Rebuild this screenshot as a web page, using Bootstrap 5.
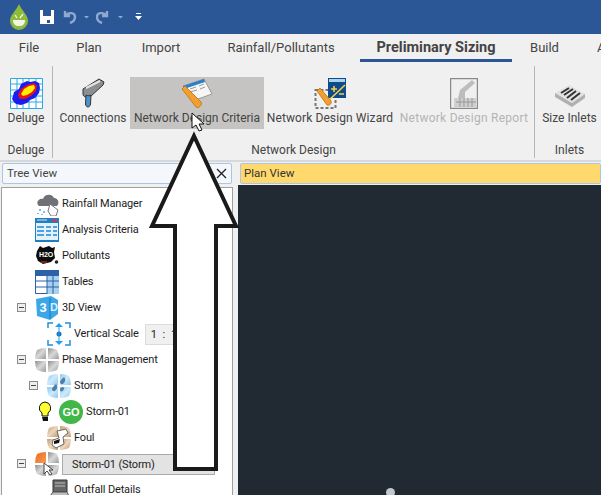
<!DOCTYPE html>
<html lang="en">
<head>
  <meta charset="UTF-8" />
  <title>Preliminary Sizing</title>
  <link rel="stylesheet" href="https://cdn.jsdelivr.net/npm/bootstrap@5.3.0/dist/css/bootstrap.min.css"/>
  <style>
    html, body { width: 601px; height: 495px; overflow: hidden; }
    body { position: relative; background: #f0f0f0; color: #444; font-family: Roboto, "Open Sans", sans-serif; font-size: 12px; line-height: 16px; }
    .defs-only { position: absolute; width: 0; height: 0; }

    .title-bar { height: 34px; background: #2b5797; padding-left: 9px; gap: 7px; }

    .tab-bar { height: 28px; padding-top: 2px; font-size: 13px; color: #444; white-space: nowrap; }
    .tab-item { flex: none; text-align: center; line-height: 24px; height: 26px; }
    .tab-on { font-weight: 700; font-size: 14.500px; border-bottom: 3px solid #2b5797; }
    .tab-file { width: 58px; }
    .tab-plan { width: 62px; }
    .tab-import { width: 82px; }
    .tab-rain { width: 158px; }
    .tab-sizing { width: 152px; }
    .tab-build { width: 65px; }
    .tab-last { width: 24px; padding-left: 20px; text-align: left; }

    .ribbon { height: 100px; border-bottom: 2px solid #d8d8d8; white-space: nowrap; }
    .rib-group { flex: none; border-right: 1px solid #b5b5b5; margin-top: 4px; height: 92px; }
    .rib-group:last-child { border-right: 0; }
    .group-deluge { width: 53px; }
    .group-design { width: 482px; }
    .group-inlets { width: 66px; padding-left: 3px; }
    .rib-tools { height: 76px; }
    .rib-btn { flex: 1 0 auto; height: 52px; margin-top: 11px; padding-top: 1px; text-align: center; }
    .rib-btn svg { display: block; margin: 0 auto 1px; }
    .btn-conn { flex: none; width: 77px; padding-left: 3px; }
    .btn-crit { flex: none; width: 134px; }
    .btn-wiz { flex: none; width: 132px; letter-spacing: .1px; }
    .btn-rep { flex: none; width: 136px; letter-spacing: .25px; }
    .rib-hot { background: #c6c4c2; }
    .rib-off { color: #b4b4b4; }
    .rib-label { text-align: center; height: 16px; line-height: 16px; }

    .panes { height: 333px; padding-top: 1px; }
    .tree-pane { width: 233px; flex: none; }
    .tree-head { height: 21px; margin: 0 1px 3px 2px; background: #f4f8fd; border: 1px solid #a9c6ea; border-radius: 2px; padding: 0 4px; line-height: 18px; font-size: 11.500px; }
    .pin-icon { margin-right: 9px; }
    .tree-body { height: 309px; margin-left: 1px; padding-top: 3px; background: #fff; border: 1px solid #a0a0a0; border-width: 1px 1px 0 1px; overflow: hidden; color: #1c1c1c; font-size: 11px; letter-spacing: -.15px; }
    .tree-row { height: 26px; position: relative; white-space: nowrap; gap: 3px; }
    .tree-row svg { flex: none; }
    .lvl-1 { padding-left: 33px; }
    .lvl-2 { padding-left: 45px; }
    .lvl-bulb { padding-left: 36px; }
    .twist { width: 9px; height: 9px; border: 1px solid #8a8a8a; background: #eee; position: absolute; top: 8px; left: 15px; }
    .lvl-2 .twist { left: 27px; }
    .twist::after { content: ""; position: absolute; left: 1px; right: 1px; top: 3px; height: 1px; background: #444; }
    .tree-combo { position: relative; background: #e3e3e3; height: 21px; line-height: 19px; border: 1px solid #dcdcdc; color: #222; flex: none; }
    .tree-combo::after { content: ""; position: absolute; right: 5px; top: 4px; width: 7px; height: 7px; border: solid #d2d2d2; border-width: 0 1px 1px 0; transform: rotate(45deg); }
    .combo-scale { width: 71px; margin-left: 3px; padding-left: 5px; letter-spacing: 1.500px; background: #f0f0f0; }
    .combo-phase { width: 153px; padding-left: 9px; border-color: #aaa; }

    .plan-pane { flex: 1; margin-left: 5px; }
    .plan-head { height: 21px; margin: 0 0 1px 2px; background: #ffd96e; border: 1px solid #a9c6ea; border-radius: 2px; padding-left: 3px; line-height: 18px; font-size: 11.500px; color: #333; }
    .plan-canvas { height: 310px; background: #212a33; position: relative; }
    .plan-dot { position: absolute; left: 148px; top: 303px; width: 9px; height: 9px; background: #c4c8cc; border-radius: 50%; }

    .big-arrow { position: absolute; left: 140px; top: 130px; }
    .hot-cursor { position: absolute; left: 191px; top: 112px; }
  </style>
</head>
<body>
  <svg class="defs-only">
    <defs>
      <linearGradient id="padGray" x1="0" y1="0" x2="1" y2="1"><stop offset="0" stop-color="#8f8f8f"/><stop offset=".5" stop-color="#d8d8d8"/><stop offset="1" stop-color="#9a9a9a"/></linearGradient>
      <linearGradient id="padBlue" x1="0" y1="0" x2="1" y2="1"><stop offset="0" stop-color="#8cc8f2"/><stop offset=".5" stop-color="#cfe9fb"/><stop offset="1" stop-color="#8cc8f2"/></linearGradient>
      <linearGradient id="padTan" x1="0" y1="0" x2="1" y2="1"><stop offset="0" stop-color="#c29a72"/><stop offset=".5" stop-color="#ecd6bd"/><stop offset="1" stop-color="#c29a72"/></linearGradient>
      <linearGradient id="padOrange" x1="0" y1="0" x2="1" y2="1"><stop offset="0" stop-color="#f0641e"/><stop offset="1" stop-color="#f2a050"/></linearGradient>
      <path id="padTl" d="M2 2Q6 0 11 0V11H0Q0 6 2 2Z"/>
      <path id="padTr" d="M13 0Q18 0 22 2Q24 6 24 11H13Z"/>
      <path id="padBl" d="M0 13H11V24Q6 24 2 22Q0 18 0 13Z"/>
      <path id="padBr" d="M13 13H24Q24 18 22 22Q18 24 13 24Z"/>
    </defs>
  </svg>

  <!-- title bar -->
  <div class="title-bar d-flex align-items-center">
    <svg width="20" height="28" viewBox="0 0 20 28"><path d="M10 1C7 8 1 12 1 18a9 9 0 0 0 18 0C19 12 13 8 10 1Z" fill="#8dbb3e"/><path d="M4 17h12c0 4-2 6-6 6s-6-2-6-6Z" fill="#f4f4e4"/><path d="M8 15l-2-3M11 15l3-4" stroke="#f4f4e4" stroke-width="1.300"/></svg>
    <svg class="ms-1" width="14" height="14" viewBox="0 0 14 14"><path d="M0 0h14v14H0Z" fill="#fff"/><path d="M3 0h8v6H3Z" fill="#2b5797"/><path d="M7 10h3v3H7Z" fill="#2b5797"/></svg>
    <svg width="28" height="14" viewBox="0 0 28 14"><path d="M4 1v5h5M4.500 6C7 2 14 2 14 7c0 3-2 5-5 6" fill="none" stroke="#8fa9cf" stroke-width="2.400"/><path d="M23 6h5l-2.500 2.500Z" fill="#8fa9cf"/></svg>
    <svg width="28" height="14" viewBox="0 0 28 14"><path d="M11 1v5H6M10.500 6C8 2 1 2 1 7c0 3 2 5 5 6" fill="none" stroke="#8fa9cf" stroke-width="2.400"/><path d="M22 6h5l-2.500 2.500Z" fill="#8fa9cf"/></svg>
    <svg class="ms-1" width="7" height="9" viewBox="0 0 7 9"><path d="M1 0h5v1H1ZM0 3h7L3.500 7Z" fill="#fff"/></svg>
  </div>

  <!-- tabs -->
  <div class="tab-bar d-flex">
    <div class="tab-item tab-file">File</div>
    <div class="tab-item tab-plan">Plan</div>
    <div class="tab-item tab-import">Import</div>
    <div class="tab-item tab-rain">Rainfall/Pollutants</div>
    <div class="tab-item tab-sizing tab-on">Preliminary Sizing</div>
    <div class="tab-item tab-build">Build</div>
    <div class="tab-item tab-last">A</div>
  </div>

  <!-- ribbon -->
  <div class="ribbon d-flex">
    <div class="rib-group group-deluge">
      <div class="rib-tools d-flex">
        <div class="rib-btn">
          <svg width="33" height="31" viewBox="0 0 33 31"><path d="M.500.500h32v30H.500Z" fill="#fff" stroke="#29abe2"/><path d="M7 .500v30M13 .500v30M19 .500v30M26 .500v30M.500 6h32M.500 12h32M.500 18h32M.500 24h32" stroke="#29abe2"/><path d="M3 18l1-4 5-3 2-5 6-3 3 1 5-1 4 2 1 5-1 5-4 5-5 2-3 3-6 2-5-1-2-2-2-3Z" fill="#1c1cf0"/><path d="M8 17l3-6 6-4 7-2 3 3-1 5-5 5-6 3-5 0Z" fill="#e81414"/><path d="M11 16l3-5 5-3 5-1 1 3-3 4-5 3-4 1Z" fill="#ffee00"/></svg>
          Deluge
        </div>
      </div>
      <div class="rib-label">Deluge</div>
    </div>
    <div class="rib-group group-design">
      <div class="rib-tools d-flex">
        <div class="rib-btn btn-conn">
          <svg width="24" height="31" viewBox="0 0 24 31"><path d="M2 11 18 1l5 3-1 3-13 12c-3 1-7 0-7-3Z" fill="#8c8f92" stroke="#333"/><path d="M5 10 19 3" stroke="#e4e4e4" stroke-width="2"/><path d="M5 17c2 1 4 1 5 0l-.5 9c-.5 4-4.500 4-5 0Z" fill="#4a94c8" stroke="#333"/></svg>
          Connections
        </div>
        <div class="rib-btn btn-crit rib-hot">
          <svg width="32" height="31" viewBox="0 0 32 31"><path d="M2 8 23 1l8 15-14 5Z" fill="#f6f6f6" stroke="#999"/><path d="M2 8 23 1l1 3L3 11Z" fill="#2a7fc9"/><path d="M9 11l6-2M9 14l7-2M18 8l5-2M19 11l5-2" stroke="#999"/><path d="M1 11 4 8 20 24c2 3-3 7-5 5Z" fill="#f0a030" stroke="#c97f1c"/></svg>
          Network Design Criteria
        </div>
        <div class="rib-btn btn-wiz">
          <svg width="32" height="31" viewBox="0 0 32 31"><path d="M1.500 12h20v18h-20Z" fill="none" stroke="#777" stroke-width="2" stroke-dasharray="3 2"/><path d="M14 0h18v20H14Z" fill="#0f4a8a"/><path d="M15 1h16v3H15Z" fill="#a8d4f0"/><path d="M17 11h6M20 8v6M25 16h5M13 24 31 7" stroke="#f6d04a" stroke-width="1.600"/><path d="M3 13l3-3 11 13c1 3-2 5-4 4Z" fill="#f0a030" stroke="#c97f1c"/></svg>
          Network Design Wizard
        </div>
        <div class="rib-btn btn-rep rib-off">
          <svg width="28" height="31" viewBox="0 0 28 31"><path d="M.500.500h27v30H.500Z" fill="#f0f0f0" stroke="#8a8a8a" stroke-width="1.500"/><path d="M4 20h22v9H4Z" fill="#cfcfcf"/><path d="M8 20l2-8 12-10 3 3-10 9v6Z" fill="#bdbdbd"/><path d="M6 24h20M10 20v9M14 20v9M18 20v9M22 20v9" stroke="#999"/></svg>
          Network Design Report
        </div>
      </div>
      <div class="rib-label">Network Design</div>
    </div>
    <div class="rib-group group-inlets">
      <div class="rib-tools d-flex">
        <div class="rib-btn">
          <svg width="32" height="31" viewBox="0 0 32 31"><path d="M1 15 15 7l16 9-13 9Z" fill="#e2e2e2"/><path d="M1 15l17 10v4L1 19ZM18 25l13-9v4L18 29Z" fill="#b0b0b0"/><path d="M7 15 15 10M10 17l9-6M13 20l9-7M17 22l9-7" stroke="#333" stroke-width="2"/></svg>
          Size Inlets
        </div>
      </div>
      <div class="rib-label">Inlets</div>
    </div>
  </div>

  <!-- panes -->
  <div class="panes d-flex">
    <div class="tree-pane">
      <div class="tree-head d-flex">
        <span class="me-auto">Tree View</span>
        <svg class="pin-icon mt-1" width="8" height="11" viewBox="0 0 8 11"><path d="M2 1h4v5h1v1H1V6h1ZM4 7v4" fill="none" stroke="#c8c8c8"/></svg>
        <svg class="mt-1" width="11" height="11" viewBox="0 0 11 11"><path d="M1 1l9 9M10 1l-9 9" stroke="#222" stroke-width="1.300"/></svg>
      </div>
      <div class="tree-body">
        <div class="tree-row lvl-1 d-flex align-items-center">
          <svg width="24" height="24" viewBox="0 0 24 24"><path d="M4 14c-4-3 0-8 4-7 1-5 9-6 11-1 4 0 6 5 3 8Z" fill="#6f7174"/><path d="M15 12l8 6-2 6h-5l-3-5Z" fill="#fff" stroke="#777"/><path d="M5 17v2M9 19v2M3 21v1M7 22v1" stroke="#5aa7dd" stroke-width="1.500"/></svg>
          <span>Rainfall Manager</span>
        </div>
        <div class="tree-row lvl-1 d-flex align-items-center">
          <svg width="24" height="24" viewBox="0 0 24 24"><path d="M0 0h24v24H0Z" fill="#1f7fc0"/><path d="M1 5h22v17H1Z" fill="#e3f1fb"/><path d="M17 1.500h5v2h-5Z" fill="#e33"/><path d="M2 1.500h10v1H2Z" fill="#cfe6f7"/><path d="M2 8h7v2H2ZM11 8h5v2h-5ZM18 8h4v2h-4ZM2 12h7v2H2ZM11 12h5v2h-5ZM18 12h4v2h-4ZM2 16h7v2H2ZM11 16h5v2h-5ZM18 16h4v2h-4Z" fill="#4aa3dd"/></svg>
          <span>Analysis Criteria</span>
        </div>
        <div class="tree-row lvl-1 d-flex align-items-center">
          <svg width="24" height="24" viewBox="0 0 24 24"><path d="M2 7l3-5 3 2 6-2 3 2 3-1-1 5 1 6-4 4-8 2-5-3-2-5Z" fill="#0c0c0c"/><text x="11" y="13" text-anchor="middle" fill="#fff" font-size="7" font-weight="700" font-family="Liberation Sans, sans-serif">H2O</text><circle cx="21.500" cy="18" r="1.800" fill="#222"/><path d="M6 18h6" stroke="#e33"/></svg>
          <span>Pollutants</span>
        </div>
        <div class="tree-row lvl-1 d-flex align-items-center">
          <svg width="24" height="24" viewBox="0 0 24 24"><path d="M.500.500h23v23H.500Z" fill="#fff" stroke="#2b62a8"/><path d="M0 0h24v6H0Z" fill="#2b62a8"/><path d="M12 6h12v18H12Z" fill="#a8d0f0"/><path d="M0 11h24M0 17h24M12 6v18M18 6v18" stroke="#2b62a8"/></svg>
          <span>Tables</span>
        </div>
        <div class="tree-row lvl-1 d-flex align-items-center">
          <span class="twist"></span>
          <svg width="24" height="24" viewBox="0 0 24 24"><path d="M1 3 16 0l7 4v14l-8 6-13-4Z" fill="#3ba6e8"/><path d="M15 2v21" stroke="#1b7bc0"/><text x="8" y="16" text-anchor="middle" fill="#fff" font-size="13" font-weight="700" font-family="Liberation Sans, sans-serif">3</text><text x="19" y="15" text-anchor="middle" fill="#d8f0ff" font-size="11" font-weight="700" font-family="Liberation Sans, sans-serif">D</text></svg>
          <span>3D View</span>
        </div>
        <div class="tree-row lvl-2 d-flex align-items-center">
          <svg width="24" height="24" viewBox="0 0 24 24"><path d="M1 6V1h5M18 1h5v5M1 18v5h5M23 18v5h-5" fill="none" stroke="#1d8fe0" stroke-width="1.500"/><path d="M12 1l4 4H8ZM12 23l4-4H8Z" fill="#22a0ee"/><circle cx="12" cy="12" r="2.500" fill="#1d6fc0"/><path d="M12 5v14" stroke="#22a0ee"/></svg>
          <span>Vertical Scale</span>
          <span class="tree-combo combo-scale">1 : 1</span>
        </div>
        <div class="tree-row lvl-1 d-flex align-items-center">
          <span class="twist"></span>
          <svg width="24" height="24" viewBox="0 0 24 24" fill="url(#padGray)"><use href="#padTl"/><use href="#padTr"/><use href="#padBl"/><use href="#padBr"/></svg>
          <span>Phase Management</span>
        </div>
        <div class="tree-row lvl-2 d-flex align-items-center">
          <span class="twist"></span>
          <svg width="24" height="24" viewBox="0 0 24 24" fill="url(#padBlue)"><use href="#padTl"/><use href="#padTr"/><use href="#padBl"/><use href="#padBr"/><path d="M7 12c2-3 4-1 3 2-1 4-5 4-5 1 0-1 1-2 2-3ZM15 5c2-3 4-1 3 2-1 4-5 4-5 1 0-1 1-2 2-3ZM14 14c2-2 3-1 3 1-1 3-4 3-4 1 0-1 0-1 1-2Z" fill="#4d80a8"/></svg>
          <span>Storm</span>
        </div>
        <div class="tree-row lvl-bulb d-flex align-items-center">
          <svg width="14" height="22" viewBox="0 0 14 22"><path d="M7 1a6 6 0 0 0-3 11v3h6v-3A6 6 0 0 0 7 1Z" fill="#ffff33" stroke="#111"/><path d="M4 16h6v4H5Z" fill="#111"/></svg>
          <svg class="ms-1" width="24" height="24" viewBox="0 0 24 24"><circle cx="12" cy="12" r="12" fill="#41b649"/><text x="12" y="16" text-anchor="middle" fill="#fff" font-size="11" font-weight="700" font-family="Liberation Sans, sans-serif">GO</text></svg>
          <span>Storm-01</span>
        </div>
        <div class="tree-row lvl-2 d-flex align-items-center">
          <svg width="24" height="24" viewBox="0 0 24 24" fill="url(#padTan)"><use href="#padTl"/><use href="#padTr"/><use href="#padBl"/><use href="#padBr"/><path d="M10 5l9-2 2 4-5 4 1 7-8 4-4-3 1-5 6-2Z" fill="#fff" stroke="#666"/><path d="M7 15l6-2-1 4-5 1Z" fill="#111"/></svg>
          <span>Foul</span>
        </div>
        <div class="tree-row lvl-1 d-flex align-items-center">
          <span class="twist"></span>
          <svg width="24" height="24" viewBox="0 0 24 24" fill="url(#padGray)"><use href="#padTl" fill="url(#padOrange)"/><use href="#padTr"/><use href="#padBl"/><use href="#padBr"/><path d="M9 11v11l3-3 3 4 2-1-3-4h4Z" fill="#fff" stroke="#444"/></svg>
          <span class="tree-combo combo-phase">Storm-01 (Storm)</span>
        </div>
        <div class="tree-row lvl-2 d-flex align-items-center">
          <svg width="24" height="24" viewBox="0 0 24 24"><path d="M6 2h14v12H6Z" fill="#666" stroke="#333"/><path d="M8 5h10M8 8h10" stroke="#bbb"/><path d="M0 22l6-8h14l4 8Z" fill="#bdbdbd" stroke="#555"/></svg>
          <span>Outfall Details</span>
        </div>
      </div>
    </div>
    <div class="plan-pane">
      <div class="plan-head">Plan View</div>
      <div class="plan-canvas"><div class="plan-dot"></div></div>
    </div>
  </div>

  <!-- annotation arrow and cursor over the app -->
  <svg class="big-arrow" width="102" height="346" viewBox="0 0 102 346"><path d="M54 6 96 96H76V339H35V96H12Z" fill="#fff" stroke="#1a1a1a" stroke-width="4" stroke-linejoin="miter"/></svg>
  <svg class="hot-cursor" width="14" height="20" viewBox="0 0 14 20"><path d="M1 1v15l4-3 3 6 3-1-3-6h5Z" fill="#fff" stroke="#111"/></svg>
</body>
</html>
